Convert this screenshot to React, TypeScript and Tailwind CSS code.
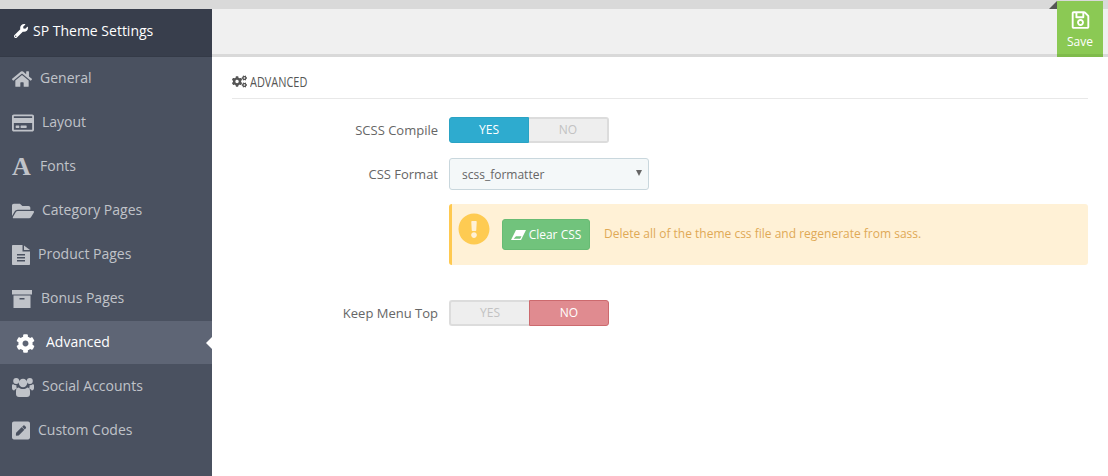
import {
  FaCog, FaCogs, FaExclamationCircle, FaFolderOpen,
  FaHome, FaPenSquare, FaRegCreditCard, FaRegSave, FaWrench,
} from "react-icons/fa";
import type { ReactNode } from "react";

function UsersIcon() {
  return (
    <svg viewBox="0 0 22 20" className="h-[20px] w-[22px]" fill="currentColor">
      <circle cx="4.2" cy="4" r="3" />
      <circle cx="17.8" cy="4" r="3" />
      <circle cx="11" cy="6" r="4.2" />
      <path d="M0 8.500c0-.8.6-1.200 1.300-1.200.9.7 2 1 3.200.9-.3.9-.1 2.200.6 3.300-1.100.2-2.300 1-2.900 2C.9 13.500 0 12.500 0 11zM22 8.500c0-.8-.6-1.200-1.300-1.200-.9.7-2 1-3.200.9.3.9.1 2.200-.6 3.300 1.100.2 2.300 1 2.900 2 1.300 0 2.200-1 2.200-2.500z" />
      <path d="M6.800 10.500c1.200 1 2.700 1.500 4.200 1.500s3-.5 4.200-1.500c1.500 0 2.800 1.400 2.800 3.500v3c0 1.800-1.200 3-3 3H7c-1.800 0-3-1.200-3-3v-3c0-2.100 1.300-3.500 2.800-3.500z" />
    </svg>
  );
}

function FileIcon() {
  return (
    <svg viewBox="0 0 18 20" className="h-[20px] w-[18px]" fill="currentColor">
      <path
        fillRule="evenodd"
        d="M.8 0H10.500v6.500H18V19.200a.8.8 0 0 1-.8.8H.8a.8.8 0 0 1-.8-.8V.8A.8.8 0 0 1 .8 0zM5 9v1.500h8V9zM5 12v1.500h8V12zM5 15v1.500h8V15z"
      />
      <path d="M12 0.500 18 5h-6z" />
    </svg>
  );
}

function ArchiveIcon() {
  return (
    <svg viewBox="0 0 20 18" className="h-[18px] w-[20px]" fill="currentColor">
      <rect x="0" y="0" width="20" height="4.500" />
      <path
        fillRule="evenodd"
        d="M1.500 5.500h17V18h-17zM7.500 8v1.500h5V8z"
      />
    </svg>
  );
}

function EraserIcon() {
  return (
    <svg viewBox="0 0 15 10" className="h-[10px] w-[15px]" fill="currentColor">
      <path d="M5 0H15L10 10H0zM2.600 8.700h6.600l1.300-2.500H5z" fillRule="evenodd" />
    </svg>
  );
}

const NAV: { label: string; icon: ReactNode; text: string; active?: boolean }[] = [
  { label: "General", icon: <FaHome className="h-[20px] w-[20px]" />, text: "w-[28px]" },
  { label: "Layout", icon: <FaRegCreditCard className="h-[24px] w-[22px]" />, text: "w-[30px]" },
  {
    label: "Fonts",
    icon: <span className="font-['Liberation_Serif',serif] text-[26px] leading-none font-bold">A</span>,
    text: "w-[28px]",
  },
  { label: "Category Pages", icon: <FaFolderOpen className="h-[20px] w-[22px]" />, text: "w-[30px]" },
  { label: "Product Pages", icon: <FileIcon />, text: "w-[26px]" },
  { label: "Bonus Pages", icon: <ArchiveIcon />, text: "w-[29px]" },
  { label: "Advanced", icon: <FaCog className="h-[19px] w-[19px]" />, text: "w-[30px]", active: true },
  { label: "Social Accounts", icon: <UsersIcon />, text: "w-[30px]" },
  { label: "Custom Codes", icon: <FaPenSquare className="h-[21px] w-[18px]" />, text: "w-[26px]" },
];

function Toggle({ value }: { value: "yes" | "no" }) {
  return (
    <div className="flex h-[26px] w-[160px] text-[12px] font-medium">
      <div
        className={
          value === "yes"
            ? "flex w-[80px] items-center justify-center rounded-l-[3px] border border-[#2aa3c4] bg-[#2eabcf] text-white"
            : "flex w-[80px] items-center justify-center rounded-l-[3px] border-2 border-r-0 border-[#dcdcdc] bg-[#eeeeee] text-[#c2c2c2]"
        }
      >
        YES
      </div>
      <div
        className={
          value === "no"
            ? "flex w-[80px] items-center justify-center rounded-r-[3px] border border-[#cc6a6e] bg-[#e08b90] text-white"
            : "flex w-[80px] items-center justify-center rounded-r-[3px] border-2 border-l-0 border-[#dcdcdc] bg-[#eeeeee] text-[#c2c2c2]"
        }
      >
        NO
      </div>
    </div>
  );
}

export default function App() {
  return (
    <div className="flex h-[476px] flex-col overflow-hidden bg-white font-['Open_Sans',sans-serif] text-[13px] text-[#666]">
      <div className="h-[9px] shrink-0 bg-[#d9d9d9]" />
      <div className="flex min-h-0 flex-1">
        <aside className="w-[212px] shrink-0 bg-[#4a5160]">
          <div className="flex h-[48px] items-center gap-[5px] border-b border-[#343a47] bg-[#383e4c] pb-[4px] pl-[14px] text-[14px] font-medium text-white">
            <FaWrench className="h-[14px] w-[14px]" />
            SP Theme Settings
          </div>
          <nav className="flex flex-col">
            {NAV.map((item) => (
              <div
                key={item.label}
                className={
                  item.active
                    ? "relative mb-px flex h-[43px] items-center bg-[#5e6575] pb-[2px] pl-[16px] text-[14px] font-medium text-white"
                    : "flex h-[44px] items-center pb-[4px] pl-[12px] text-[14px] text-[#c0c3c9]"
                }
              >
                <span className={`${item.text} flex shrink-0 items-center pt-[3px]`}>{item.icon}</span>
                {item.label}
                {item.active && (
                  <span className="absolute top-[16px] right-0 h-0 w-0 border-y-[6px] border-r-[6px] border-y-transparent border-r-white" />
                )}
              </div>
            ))}
          </nav>
        </aside>
        <main className="min-w-0 flex-1">
          <div className="relative flex h-[48px] justify-end border-b-[3px] border-[#d9d9d9] bg-[#f0f0f0] pr-[5px]">
            <span className="absolute top-[-8px] right-[51px] h-0 w-0 border-b-[8px] border-l-[8px] border-b-[#555] border-l-transparent" />
            <button
              type="button"
              className="z-10 -mt-[8px] flex h-[56px] w-[46px] flex-col items-center justify-end border-b-[3px] border-[#7fbb4b] bg-[#8bc954] pb-[3px] text-[12px] text-white"
            >
              <FaRegSave className="mb-[3px] h-[20px] w-[19px]" />
              Save
            </button>
          </div>
          <div className="px-[20px]">
            <h2 className="flex h-[42px] items-center gap-[3px] border-b border-[#e8e8e8] pt-[7px] text-[14px] text-[#555]">
              <FaCogs className="h-[15px] w-[15px]" />
              <span className="inline-block origin-left scale-x-[0.78]">ADVANCED</span>
            </h2>
            <div className="mt-[18px] grid grid-cols-[206px_1fr] items-center gap-x-[11px]">
              <label className="pt-[2px] text-right">SCSS Compile</label>
              <Toggle value="yes" />
              <label className="mt-[15px] pt-[2px] text-right">CSS Format</label>
              <div className="relative mt-[15px] flex h-[32px] w-[200px] items-center rounded-[3px] border border-[#c9d7dd] bg-[#f4f8f9] pt-[1px] pl-[12px] text-[12px] text-[#666]">
                scss_formatter
                <span className="absolute top-[11px] right-[6px] h-0 w-0 border-x-[3.5px] border-t-[6px] border-x-transparent border-t-[#666]" />
              </div>
              <div className="col-start-2 mt-[14px] flex h-[61px] rounded-[3px] border-l-[3px] border-[#ffc94f] bg-[#fff1d6] pl-[6px]">
                <FaExclamationCircle className="mt-[9px] h-[32px] w-[32px] shrink-0 text-[#fecb52]" />
                <button
                  type="button"
                  className="mt-[15px] ml-[12px] flex h-[31px] w-[88px] items-center justify-center gap-[3px] rounded-[3px] border border-[#68bb74] bg-[#71c37c] text-[12px] text-white"
                >
                  <EraserIcon />
                  Clear CSS
                </button>
                <p className="mt-[21px] ml-[14px] text-[12px] leading-[18px] text-[#e0a956]">
                  Delete all of the theme css file and regenerate from sass.
                </p>
              </div>
              <label className="mt-[35px] pt-[2px] text-right">Keep Menu Top</label>
              <div className="mt-[35px]">
                <Toggle value="no" />
              </div>
            </div>
          </div>
        </main>
      </div>
    </div>
  );
}
